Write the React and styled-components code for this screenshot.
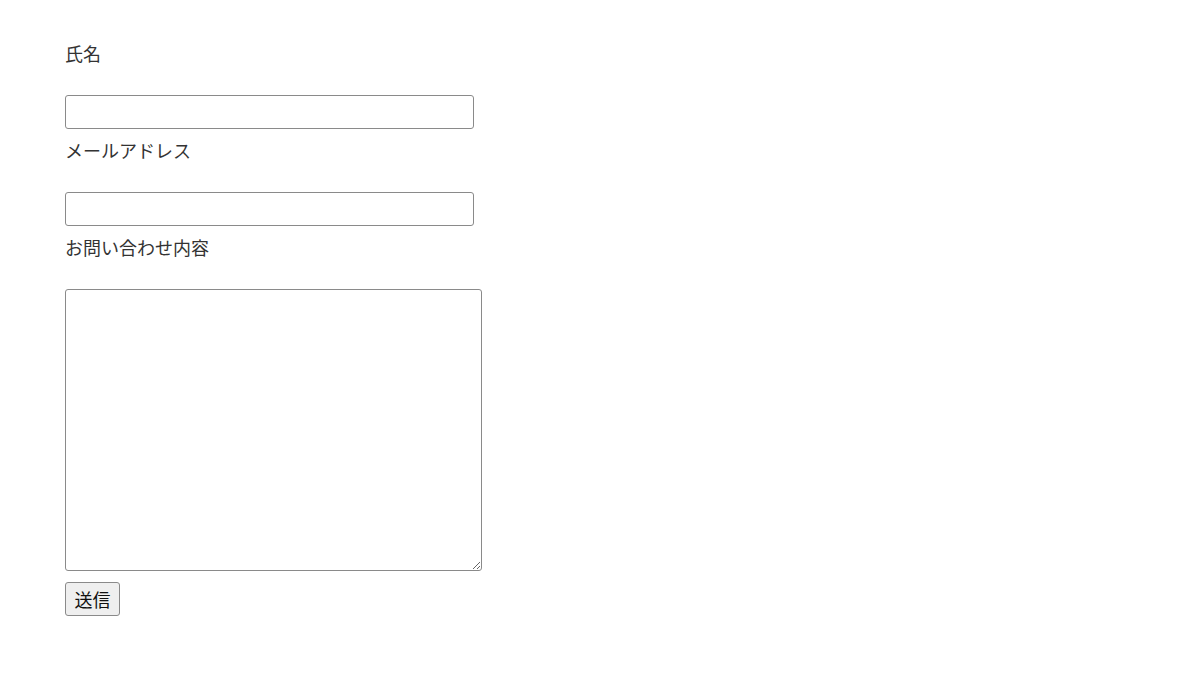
import React from "react";
import styled, { createGlobalStyle } from "styled-components";

const Global = createGlobalStyle`
  html, body { margin: 0; padding: 0; background: #fff; }
  body { font-family: "Noto Sans CJK JP", "Noto Sans", sans-serif; color: #333; }
`;

const Form = styled.form`
  display: flex;
  flex-direction: column;
  align-items: flex-start;
  padding: 39px 0 0 65px;
`;

const Label = styled.label`
  display: block;
  font-size: 18px;
  line-height: 28px;
  margin: ${(p) => (p.$first ? "0" : "7px")} 0 28px 0;
  color: #333;
`;

const Input = styled.input`
  box-sizing: border-box;
  width: 409px;
  height: 34px;
  border: 1px solid #8a8a8a;
  border-radius: 3px;
  padding: 2px 6px;
  font-size: 18px;
  font-family: inherit;
  background: #fff;
  outline: none;
`;

const TextArea = styled.textarea`
  box-sizing: border-box;
  width: 417px;
  height: 282px;
  border: 1px solid #8a8a8a;
  border-radius: 3px;
  padding: 4px 6px;
  font-size: 18px;
  font-family: inherit;
  background: #fff;
  outline: none;
  display: block;
`;

const Button = styled.button`
  box-sizing: border-box;
  margin-top: 11px;
  width: 55px;
  height: 34px;
  padding: 0;
  font-size: 18px;
  font-family: "Noto Sans CJK JP", sans-serif;
  color: #111;
  background: #efefef;
  border: 1px solid #8a8a8a;
  border-radius: 3px;
`;

export default function App() {
  return (
    <>
      <Global />
      <Form onSubmit={(e) => e.preventDefault()}>
        <Label $first htmlFor="name">氏名</Label>
        <Input id="name" type="text" />
        <Label htmlFor="email">メールアドレス</Label>
        <Input id="email" type="email" />
        <Label htmlFor="msg">お問い合わせ内容</Label>
        <TextArea id="msg" />
        <Button type="submit">送信</Button>
      </Form>
    </>
  );
}
